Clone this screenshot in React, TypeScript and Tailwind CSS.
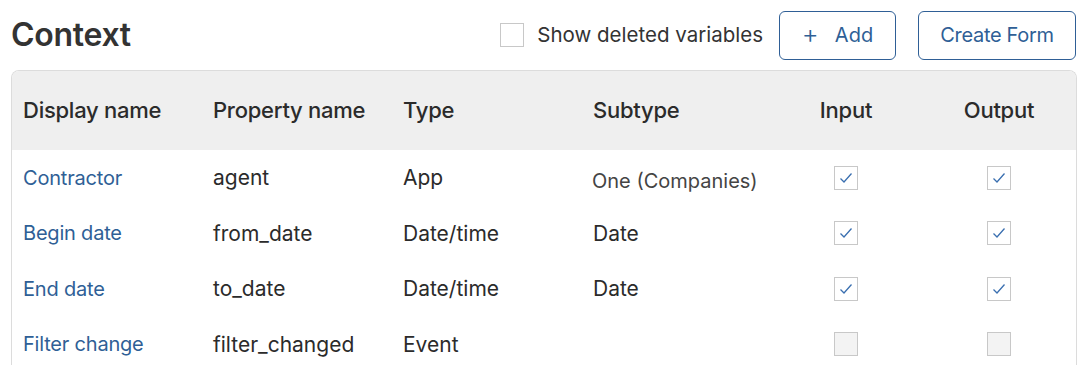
import React from 'react';

type Row = {
  display: string;
  property: string;
  type: string;
  subtype: string;
  input: boolean;
  output: boolean;
  disabled?: boolean;
};

const ROWS: Row[] = [
  { display: 'Contractor', property: 'agent', type: 'App', subtype: 'One (Companies)', input: true, output: true },
  { display: 'Begin date', property: 'from_date', type: 'Date/time', subtype: 'Date', input: true, output: true },
  { display: 'End date', property: 'to_date', type: 'Date/time', subtype: 'Date', input: true, output: true },
  { display: 'Filter change', property: 'filter_changed', type: 'Event', subtype: '', input: false, output: false, disabled: true },
];

const Check: React.FC<{ checked: boolean; disabled?: boolean }> = ({ checked, disabled }) => (
  <div
    className={`w-6 h-6 border border-[#c8c8c8] flex items-center justify-center ${disabled ? 'bg-[#f3f3f3]' : 'bg-white'}`}
  >
    {checked && (
      <svg width="14" height="12" viewBox="0 0 14 12" fill="none">
        <path d="M1.5 6.5 L5 10 L12.5 1.5" stroke="#3a6fb0" strokeWidth="1.3" />
      </svg>
    )}
  </div>
);

const grid = 'grid grid-cols-[190px_190px_190px_177px_152px_154px] pl-[11px]';

export default function App() {
  return (
    <div className="w-[1085px] h-[365px] bg-white overflow-hidden text-[#333] font-['Inter',sans-serif]">
      {/* top bar */}
      <div className="flex items-center h-[70px] pl-[11px] pr-[9px]">
        <h1 className="text-[32px] font-semibold tracking-[-0.3px] text-[#333] mt-[-1px]">Context</h1>
        <div className="ml-auto flex items-center">
          <div className="w-6 h-6 border border-[#c8c8c8] bg-white" />
          <span className="ml-[13px] text-[20.5px] text-[#333]">Show deleted variables</span>
          <button className="ml-[16px] h-[49px] w-[117px] border border-[#2f5f96] rounded-md text-[#2f5f96] text-[20px] flex items-center justify-center gap-[16px]">
            <span className="text-[26px] font-light leading-none mt-[-2px]">+</span>
            <span>Add</span>
          </button>
          <button className="ml-[22px] h-[49px] w-[158px] border border-[#2f5f96] rounded-md text-[#2f5f96] text-[20px] tracking-[-0.3px]">
            Create Form
          </button>
        </div>
      </div>

      {/* table */}
      <div className="mx-[11px] w-[1066px] border border-[#dcdcdc] border-b-0 rounded-t-lg overflow-hidden">
        <div className={`${grid} bg-[#efefef] h-[79px] items-center text-[22px] font-medium text-[#2b2b2b] tracking-[-0.25px]`}>
          <div>Display name</div>
          <div>Property name</div>
          <div>Type</div>
          <div>Subtype</div>
          <div className="text-center">Input</div>
          <div className="text-center">Output</div>
        </div>
        {ROWS.map((r) => (
          <div key={r.display} className={`${grid} h-[55.5px] items-center text-[21px]`}>
            <div className="text-[#2f5f96] text-[20px] tracking-[-0.2px]">{r.display}</div>
            <div className="text-[#2b2b2b]">{r.property}</div>
            <div className="text-[#2b2b2b]">{r.type}</div>
            <div className={r.subtype.startsWith('One') ? 'text-[#444] text-[20px] mt-[6px] ml-[-1px]' : 'text-[#2b2b2b]'}>{r.subtype}</div>
            <div className="flex justify-center">
              <Check checked={r.input} disabled={r.disabled} />
            </div>
            <div className="flex justify-center">
              <Check checked={r.output} disabled={r.disabled} />
            </div>
          </div>
        ))}
      </div>
    </div>
  );
}
